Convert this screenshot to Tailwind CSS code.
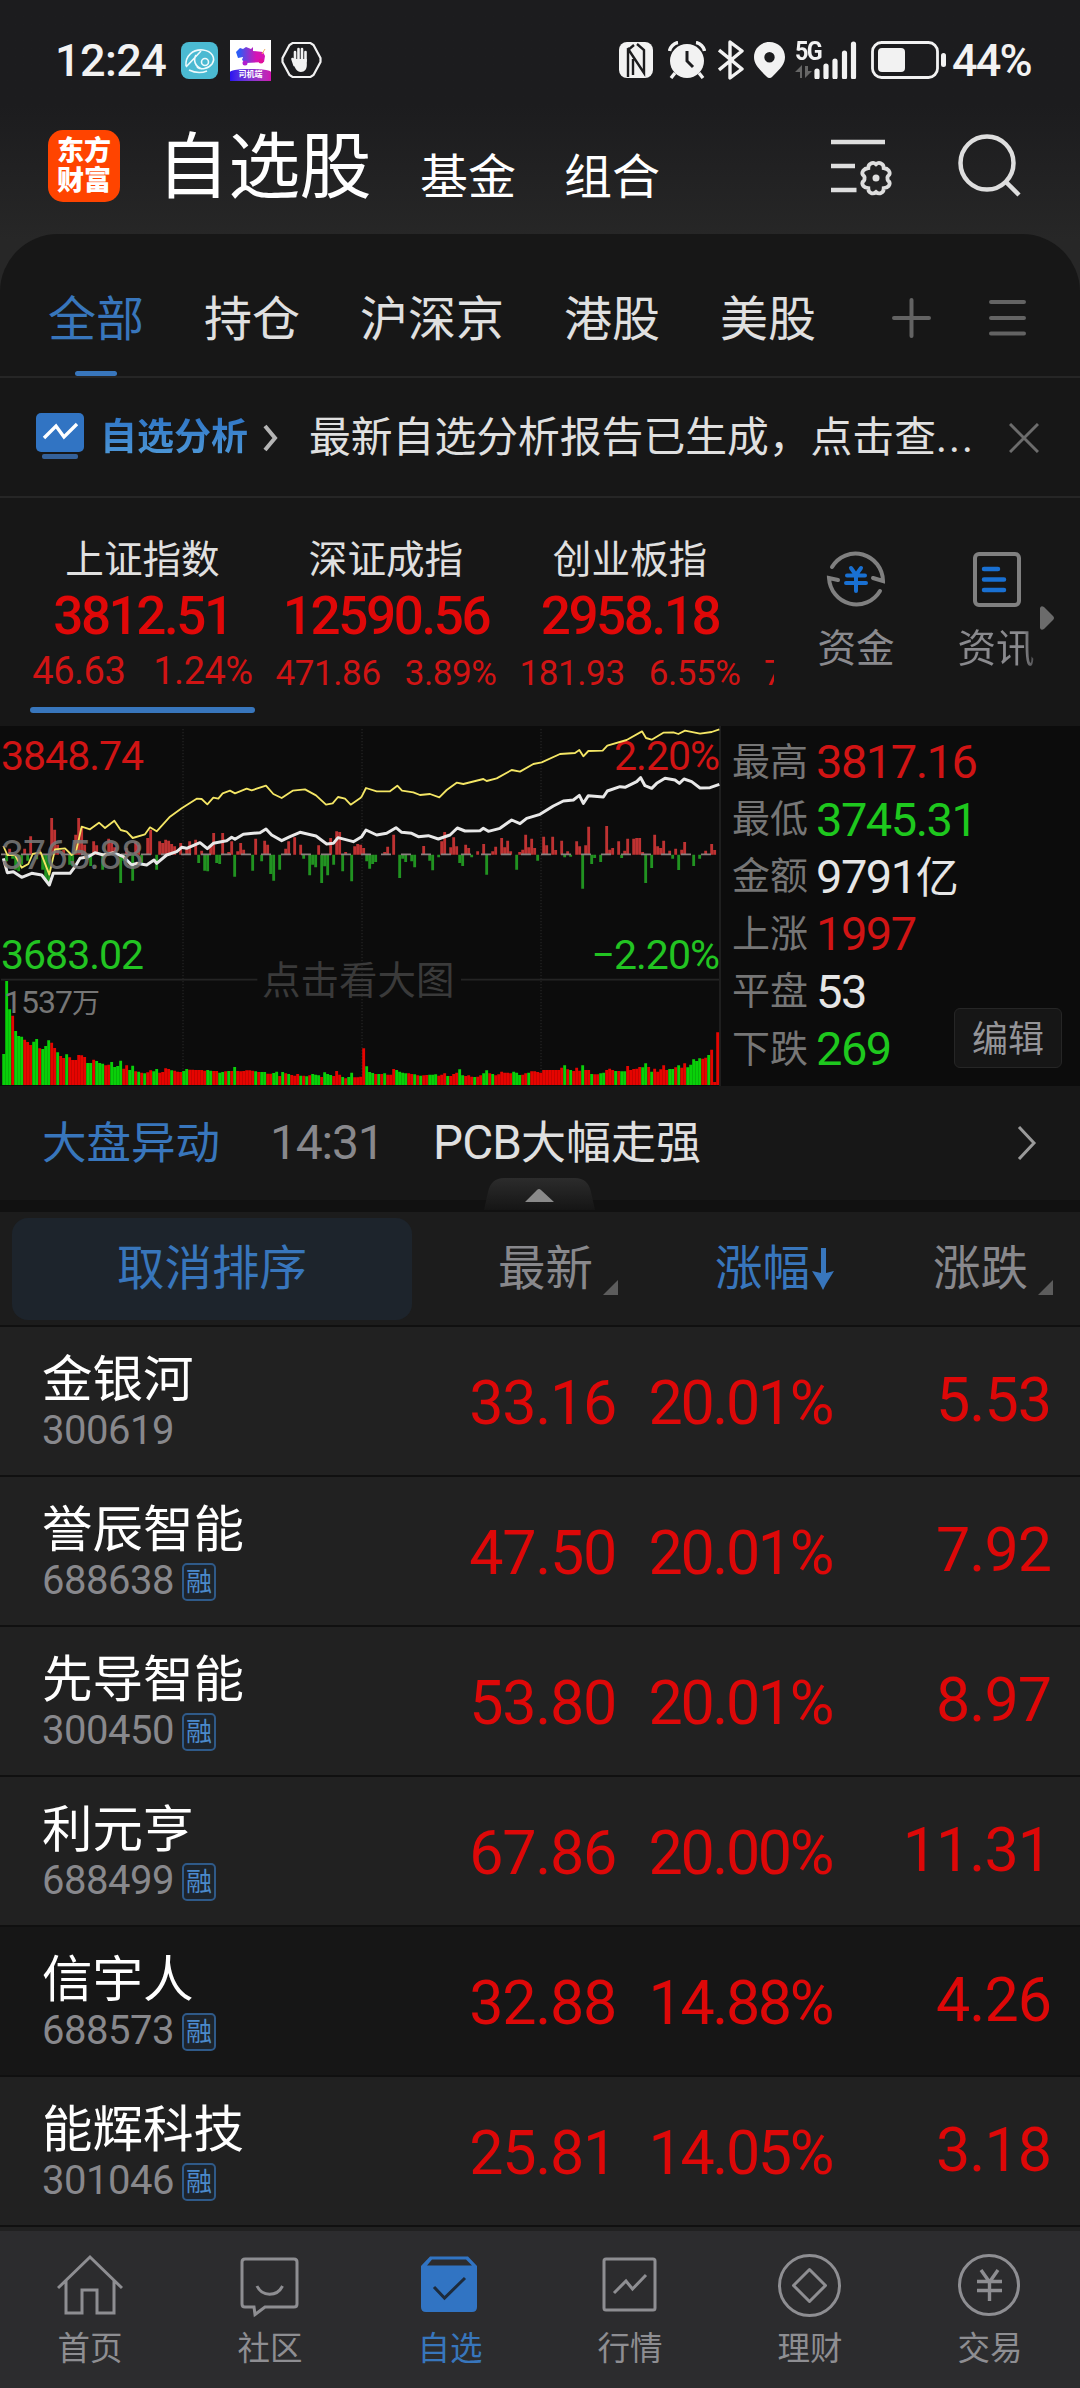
<!DOCTYPE html>
<html lang="zh-CN">
<head>
  <meta charset="UTF-8">
  <meta name="viewport" content="width=device-width, initial-scale=1.0">
  <script src="https://cdn.jsdelivr.net/npm/@tailwindcss/browser@4"></script>
  <title>自选股</title>
</head>
<body class="bg-[#171717]">
  <div class="w-[1080px] h-[2388px] overflow-hidden flex flex-col whitespace-nowrap leading-none text-[#e0e0e0] font-[Roboto,'Noto_Sans_CJK_SC',sans-serif]">

    <div class="h-[300px] shrink-0 bg-linear-to-b from-[#1c1c1e] from-35% to-[#272727] to-80%">
      <!-- Status bar -->
      <div class="h-[120px] flex items-center pl-[55px] pr-[47px] text-[#f2f2f2]">
        <span class="w-[126px] text-[45px] font-medium tracking-[-0.600px]">12:24</span>
        <svg class="w-[37px] h-[37px]" viewBox="0 0 37 37" fill="none">
          <rect width="37" height="37" rx="8" fill="#4bbad2"/>
          <path d="M5 24C4 14 12 7 22 8c9 1 13 8 9 14-4 5-11 6-15 3M5 25L20 9M15 13c-3 5-1 12 6 14M8 28c6 3 13 3 18 1" stroke="#eefafc" stroke-width="1.6"/>
          <circle cx="24" cy="20" r="3.5" stroke="#eefafc" stroke-width="1.6"/>
        </svg>
        <div class="ml-[12px] w-[41px] h-[41px] bg-white flex flex-col justify-between overflow-hidden">
          <svg class="w-[41px] h-[28px]" viewBox="0 0 41 28">
            <defs><linearGradient id="van"><stop offset="0.1" stop-color="#2b5cf6"/><stop offset="0.7" stop-color="#d613b4"/></linearGradient></defs>
            <path d="M6 12l4-4 3 1 3-2 5 2 2-2v4l10 1 2 4-1 6-18 1-4-3 1-3-5 1z" fill="url(#van)"/>
            <circle cx="15" cy="23" r="2.5" fill="#b01fd0"/><circle cx="31" cy="21" r="2.5" fill="#e0109a"/>
            <path d="M32 14l3-5" stroke="#f0b060"/>
          </svg>
          <div class="h-[12px] rounded-t-[40%_3px] bg-linear-to-r from-[#2a10f0] to-[#d010b0] text-white text-[8px] leading-[12px] font-bold text-center">司机端</div>
        </div>
        <svg class="ml-[10px] w-[41px] h-[38px]" viewBox="0 0 41 38">
          <path d="M11.500 2h18l3 2 7 13v4l-7 13-3 2h-18l-3-2-7-13v-4l7-13z" fill="none" stroke="#f2f2f2" stroke-width="2.2"/>
          <path d="M14 20V11M17.500 19V8M21 19V8M24.500 20V11M13.500 24L11.500 18" stroke="#f2f2f2" stroke-width="2.6" stroke-linecap="round"/>
          <path d="M12.700 18h13.100v6c0 4-2 7-6 7s-6-4-7.100-8z" fill="#f2f2f2"/>
        </svg>

        <svg class="ml-auto w-[34px] h-[36px]" viewBox="0 0 34 36">
          <rect width="34" height="36" rx="8" fill="#f2f2f2"/>
          <path d="M9 35V8l6-5M8.500 6L25 31V12M25 28V8l-7-6M14 33V17" fill="none" stroke="#1c1c1e" stroke-width="2.400"/>
        </svg>
        <svg class="ml-[15px] w-[38px] h-[38px]" viewBox="0 0 38 38" fill="none" stroke="#f2f2f2">
          <circle cx="19" cy="20" r="17" fill="#f2f2f2" stroke="none"/>
          <path d="M1.500 10C2 6 6 2 10 1.500M36.500 10C36 6 32 2 28 1.500M7 32l-4 5M31 32l4 5" stroke-width="3.400"/>
          <path d="M19 10v10l6 6" stroke="#1c1c1e" stroke-width="3"/>
        </svg>
        <svg class="ml-[12px] w-[26px] h-[40px]" viewBox="0 0 26 40" fill="none" stroke="#f2f2f2" stroke-width="3.400" stroke-linejoin="round">
          <path d="M1 10l23 19-12 9V2l12 9L1 30"/>
        </svg>
        <svg class="ml-[10px] w-[31px] h-[36px]" viewBox="0 0 31 36">
          <path fill-rule="evenodd" d="M15.500 0C7 0 0 6.500 0 15c0 7 4 11 12.500 19.500q3 3 6 0C27 26 31 22 31 15 31 6.500 24 0 15.500 0zm0 10a5.200 5.200 0 1 1 0 10.400 5.200 5.200 0 0 1 0-10.400z" fill="#f2f2f2"/>
        </svg>
        <div class="relative ml-[10px] w-[62px] h-[38px]">
          <span class="absolute left-0 -top-[2px] text-[26px] leading-[24px] font-bold tracking-[-2px] scale-x-90 origin-left">5G</span>
          <svg class="w-[62px] h-[38px]" viewBox="0 0 62 38">
            <path d="M5 37V31H0l7-7v13zM10 25v12l7-7h-4v-5z" fill="#666"/>
            <path d="M22 30v6M31 25v11M40 20v16M49.500 12v24M58.500 3v33" stroke="#f2f2f2" stroke-width="5.200" stroke-linecap="round"/>
          </svg>
        </div>
        <svg class="ml-[14px] w-[75px] h-[38px]" viewBox="0 0 75 38">
          <rect x="1.500" y="1.500" width="65" height="35" rx="9" fill="none" stroke="#f2f2f2" stroke-width="2.800"/>
          <rect x="7" y="7" width="27" height="24" rx="4" fill="#f2f2f2"/>
          <rect x="70" y="12" width="5" height="14" rx="2.500" fill="#f2f2f2"/>
        </svg>
        <span class="ml-[6px] w-[81px] text-[45px] font-medium tracking-[-1.800px]">44%</span>
      </div>

      <!-- Title bar -->
      <div class="h-[114px] flex pl-[48px] text-white">
        <div class="mt-[10px] w-[72px] h-[72px] rounded-[15px] bg-[#ff4400] flex flex-col items-center justify-center text-[27px] leading-[30px] font-black">
          <span>东方</span><span>财富</span>
        </div>
        <span class="ml-[37px] mt-[12px] w-[217px] text-[72px] leading-[72px] tracking-[-0.700px]">自选股</span>
        <span class="ml-[46px] mt-[34px] text-[48px]">基金</span>
        <span class="ml-[48px] mt-[34px] text-[48px]">组合</span>
        <svg class="ml-[171px] mt-[16px] w-[64px] h-[62px]" viewBox="0 0 64 62" fill="none" stroke="#dedede" stroke-width="4.500">
          <path d="M0 6h54M0 30h24M0 54h25.500"/>
          <path d="M40 27.500q2.500-1.500 5 .7 2.500-2.200 5-.7 2.700 1 2.700 4.500 3.300.5 5 2.500 1.800 2.500.3 4.500-2 1.500-1.500 3.500-.2 2 1.500 3 1.500 2-.3 4.500-1.700 2-5 2.200 0 3.800-2.700 4.800-2.500 1.200-5-1-2.500 2.200-5 1-2.700-1-2.700-4.800-3.300-.2-5-2.200-1.800-2.500-.3-4.500 1.700-1 1.500-3 .5-2-1.500-3.500-1.500-2 .3-4.500 1.700-2 5-2.500 0-3.500 2.700-4.500z" stroke-width="3.800"/>
          <circle cx="45" cy="42" r="3.500" fill="#dedede" stroke="none"/>
        </svg>
        <svg class="ml-[63px] mt-[12px] w-[66px] h-[66px]" viewBox="0 0 66 66" fill="none" stroke="#dedede" stroke-width="4.500">
          <circle cx="29" cy="31" r="26.500"/><path d="M48 50l13 13"/>
        </svg>
      </div>
      <div class="h-[66px] rounded-t-[58px] bg-[#171717]"></div>
    </div>

    <!-- Group tabs -->
    <div class="-mt-[66px] h-[144px] shrink-0 border-b-2 border-[#262626] flex gap-[60px] pl-[48px] pt-[62px] text-[48px]">
      <div class="flex flex-col items-center text-[#3876bc]"><span>全部</span><span class="mt-[27px] w-[42px] h-[6px] rounded-full bg-[#3876bc]"></span></div>
      <span>持仓</span>
      <span>沪深京</span>
      <span>港股</span>
      <span>美股</span>
      <svg class="ml-[16px] mt-px w-[134px] h-[42px]" viewBox="0 0 134 42" fill="none" stroke="#636363" stroke-width="4" stroke-linecap="round">
        <path d="M2 21h35M19.500 3v36M99 5h33M99 21h33M99 36.500h33"/>
      </svg>
    </div>

    <!-- Analysis banner -->
    <div class="h-[120px] shrink-0 border-b-2 border-[#262626] flex items-center pl-[36px]">
      <svg class="-mt-[1px] w-[48px] h-[47px]" viewBox="0 0 48 47">
        <rect width="48" height="39" rx="5" fill="#3174c3"/><rect x="6" y="41" width="36" height="5" rx="2" fill="#34619a"/>
        <path d="M8 25l12-12 8 11 13-13" fill="none" stroke="#fff" stroke-width="3.400"/>
      </svg>
      <span class="ml-[16px] mt-[2px] w-[149px] text-[37px] font-bold bg-linear-to-b from-[#2f75c6] to-[#519bd8] bg-clip-text text-transparent leading-[44px]">自选分析</span>
      <svg class="ml-[14px] mt-[2px] w-[16px] h-[28px]" viewBox="0 0 16 28" fill="none" stroke="#b5b5b5" stroke-width="4"><path d="M2 2l10 12L2 26"/></svg>
      <span class="ml-[30px] mt-[2px] w-[668px] text-[41.800px]">最新自选分析报告已生成，点击查<span class="tracking-[2px]">...</span></span>
      <svg class="ml-[32px] mt-[2px] w-[30px] h-[30px]" viewBox="0 0 30 30" stroke="#6c6c6c" stroke-width="3"><path d="M1 1l28 28M29 1L1 29"/></svg>
    </div>

    <!-- Indices -->
    <div class="h-[228px] shrink-0 flex">
      <div class="w-[774px] pl-[21px] overflow-hidden flex">
        <div class="w-[243px] shrink-0 flex flex-col items-center pt-[43px]">
          <span class="text-[38.600px]">上证指数</span>
          <span class="mt-[10px] text-[53px] font-medium tracking-[-2.400px] text-[#e00808]">3812.51</span>
          <div class="mt-[9px] flex gap-[28px] text-[38px] tracking-[-0.500px] text-[#d01414]"><span>46.63</span><span>1.24%</span></div>
          <span class="mt-[17px] w-[225px] h-[6px] rounded-full bg-[#3876bc]"></span>
        </div>
        <div class="w-[244px] shrink-0 flex flex-col items-center pt-[43px]">
          <span class="text-[38.600px]">深证成指</span>
          <span class="mt-[10px] text-[53px] font-medium tracking-[-2.400px] text-[#e00808]">12590.56</span>
          <div class="mt-[13px] flex gap-[24px] text-[35px] tracking-[-0.400px] text-[#d01414]"><span>471.86</span><span>3.89%</span></div>
        </div>
        <div class="w-[244px] shrink-0 flex flex-col items-center pt-[43px]">
          <span class="text-[38.600px]">创业板指</span>
          <span class="mt-[10px] text-[53px] font-medium tracking-[-2.400px] text-[#e00808]">2958.18</span>
          <div class="mt-[13px] flex gap-[24px] text-[35px] tracking-[-0.400px] text-[#d01414]"><span>181.93</span><span>6.55%</span></div>
        </div>
        <span class="ml-[12px] mt-[158px] text-[35px] text-[#d01414]">7</span>
      </div>
      <div class="ml-[43px] w-[78px] flex flex-col items-center pt-[50px] text-[#8a8a8e]">
        <svg class="w-[60px] h-[62px]" viewBox="0 0 60 62" fill="none" stroke="#808080" stroke-width="4" stroke-linecap="round">
          <path d="M6 19A27.500 28 0 0 1 57 33l-10-3M54 43A27.500 28 0 0 1 3 30l9 2"/>
          <path d="M25 20l5 7 5-7M21 27.500h18M20 35h20M30 28v15" stroke="#1970d2"/>
        </svg>
        <span class="mt-[20px] text-[38.600px]">资金</span>
      </div>
      <div class="ml-[63px] w-[78px] flex flex-col items-center pt-[53px] text-[#8a8a8e]">
        <svg class="w-[50px] h-[56px]" viewBox="0 0 50 56" fill="none" stroke="#808080" stroke-width="4" stroke-linecap="round">
          <rect x="3" y="3" width="44" height="51" rx="4"/>
          <path d="M12 18h14M12 28.500h20M12 39h20" stroke="#1970d2" stroke-width="4.500"/>
        </svg>
        <span class="mt-[20px] -ml-[2px] text-[38.600px] leading-[44px] bg-linear-to-r from-[#8a8a8e] from-85% to-[#4a4a4c] bg-clip-text text-transparent">资讯</span>
      </div>
      <svg class="ml-[3px] mt-[107px] w-[16px] h-[26px]" viewBox="0 0 16 26"><path d="M1 3v20q1 3 4 1l9-9q2-2 0-4L5 2Q2 0 1 3z" fill="#6b6b6b"/></svg>
    </div>

    <!-- Intraday chart and market stats -->
    <div class="relative h-[360px] shrink-0 flex bg-[#0c0c0c]">
      <div class="relative w-[722px] h-[360px] text-[41px] tracking-[-1px]">
        <svg class="absolute left-0 top-0 w-[721px] h-[360px]" viewBox="0 18 2163 1080" fill="none">
          <path d="M549 27V1095M1086 27V1095M1623 27V1095" stroke="#232323" stroke-width="4" stroke-dasharray="4 5"/>
          <path d="M3 779H772M1383 779H2160" stroke="#242424" stroke-width="5"/>
          <path d="M2160 18V1098" stroke="#1e1e1e" stroke-width="6"/>
          <path id="vol-up" stroke="#e60400" stroke-width="8.600"/>
          <path id="vol-down" stroke="#09d009" stroke-width="8.600"/>
        </svg>
        <span class="absolute left-px top-[10px] text-[#d01414]">3848.74</span>
        <span class="absolute right-[3px] top-[10px] text-[#d01414]">2.20%</span>
        <svg class="absolute left-0 top-0 w-[721px] h-[360px]" viewBox="0 18 2163 1080" fill="none">
          <path id="flow-up" stroke="#be3232" stroke-width="8.500"/>
          <path id="flow-down" stroke="#219321" stroke-width="8.500"/>
          <path d="M3 403H2145" stroke="#8a8080" stroke-width="5" stroke-dasharray="30 30"/>
          <polyline stroke="#e8e8e8" stroke-width="9" stroke-linejoin="round" points="10,415 22,458 40,455 65,472 95,460 125,465 148,495 160,460 210,460 225,440 240,415 265,410 285,398 310,405 340,398 370,410 395,435 410,430 440,435 462,420 470,430 500,405 530,395 545,382 560,385 600,368 622,386 640,370 680,362 695,352 705,358 730,343 760,340 780,338 798,327 815,345 845,362 870,350 900,337 935,345 948,348 980,372 1000,370 1014,353 1060,365 1085,350 1098,330 1130,345 1160,340 1188,323 1205,337 1235,340 1255,350 1285,347 1315,357 1350,345 1372,324 1395,333 1440,332 1450,325 1465,334 1500,325 1535,300 1560,311 1580,295 1620,283 1660,258 1690,243 1720,240 1738,226 1750,250 1765,227 1810,231 1822,213 1860,200 1875,202 1910,185 1922,173 1935,197 1955,205 1970,190 1995,175 2025,180 2038,190 2052,177 2075,185 2100,204 2130,203 2158,193"/>
          <polyline stroke="#f4e665" stroke-width="5.500" stroke-linejoin="round" points="10,378 22,405 45,405 65,443 85,432 98,402 122,397 148,464 165,388 195,385 215,405 228,395 245,320 270,328 297,308 315,324 343,302 362,330 380,335 398,354 435,343 450,322 470,334 510,290 545,265 590,236 605,237 622,253 640,233 655,236 668,220 690,212 705,220 740,206 755,211 798,197 820,222 845,234 878,212 915,208 948,226 978,254 998,250 1014,231 1035,236 1052,254 1080,235 1085,230 1098,204 1130,214 1170,214 1192,197 1206,212 1240,217 1260,225 1290,222 1318,232 1340,210 1370,188 1390,192 1450,177 1460,183 1490,175 1535,150 1560,155 1600,132 1625,127 1680,102 1725,99 1738,90 1750,109 1765,93 1808,92 1822,77 1880,60 1926,34 1938,54 1955,59 1990,38 2020,37 2035,42 2055,32 2100,41 2135,36 2158,28"/>
        </svg>
        <span class="absolute left-px top-[109px] text-[#777777e0]">3765.88</span>
        <span class="absolute left-px top-[209px] text-[#22c422]">3683.02</span>
        <span class="absolute right-[3px] top-[209px] text-[#22c422]">−2.20%</span>
        <span class="absolute left-[4px] top-[260px] text-[32px] tracking-[-1px] text-[#767676]">1537<span class="text-[28px]">万</span></span>
        <span class="absolute left-[262px] top-[236px] text-[38.500px] tracking-normal text-[#3a3a3a]">点击看大图</span>
      </div>
      <div id="stats" class="pl-[10px] pt-[7px]"></div>
      <button class="absolute left-[954px] top-[282px] w-[108px] h-[60px] pt-[3px] rounded-[6px] border border-[#262626] bg-[#161616] text-[36px] text-[#949498]">编辑</button>
    </div>

    <!-- Market alert -->
    <div class="relative h-[126px] shrink-0 flex items-center pl-[42px] border-b-[12px] border-[#111]">
      <span class="mt-[2px] text-[44.500px] text-[#3876bc]">大盘异动</span>
      <span class="ml-[50px] w-[117px] text-[48px] tracking-[-1.200px] text-[#88888c]">14:31</span>
      <span class="ml-[46px] mt-px text-[47.500px] tracking-[-0.800px]">PCB<span class="text-[45px] tracking-normal">大幅走强</span></span>
      <svg class="absolute left-[1017px] top-[40px] w-[20px] h-[34px]" viewBox="0 0 20 34" fill="none" stroke="#9a9a9a" stroke-width="3"><path d="M2 1l15 16L2 33"/></svg>
      <svg class="absolute left-[484px] top-[92px] w-[111px] h-[32px]" viewBox="0 0 111 32">
        <defs><linearGradient id="tab" x2="0" y2="1"><stop stop-color="#2c2c2c"/><stop offset="1" stop-color="#151515"/></linearGradient></defs>
        <path d="M0 32L4 14Q7 0 20 0H91Q104 0 107 14L111 32z" fill="url(#tab)"/>
        <path d="M55 11q1 0 2 1l13 12H41L53 12q1-1 2-1z" fill="#8a8a8a"/>
      </svg>
    </div>

    <!-- Table header -->
    <div class="h-[115px] shrink-0 flex items-center pl-[12px] bg-[#1c1c1c] border-b-2 border-[#101010] text-[47.500px] text-[#88888c]">
      <button class="w-[400px] h-[102px] pt-[2px] rounded-[16px] bg-[#1d242c] text-[#3876bc]">取消排序</button>
      <span class="ml-[86px] mt-[2px]">最新</span>
      <svg class="ml-[10px] mt-[38px] w-[15px] h-[15px]" viewBox="0 0 15 15"><path d="M15 0v15H0z" fill="#5c5c5c"/></svg>
      <span class="ml-[97px] mt-[2px] text-[#3876bc]">涨幅</span>
      <svg class="ml-[2px] w-[22px] h-[43px]" viewBox="0 0 22 43"><path d="M9 1h5v25l8-2-8 13-3 6-3-6L0 24l9 2z" fill="#3876bc"/></svg>
      <span class="ml-[99px] mt-[2px]">涨跌</span>
      <svg class="ml-[10px] mt-[38px] w-[15px] h-[15px]" viewBox="0 0 15 15"><path d="M15 0v15H0z" fill="#5c5c5c"/></svg>
    </div>

    <!-- Stock rows -->
    <div id="stocks" class="h-[904px] shrink-0 bg-[#212121]"></div>

    <!-- Bottom nav -->
    <div class="h-[157px] shrink-0 bg-[#2c2c2e] grid grid-cols-6 text-[32.500px] text-[#8e8e92]">
      <div class="flex flex-col items-center pt-[23px] gap-[15px]">
        <svg class="w-[66px] h-[64px]" viewBox="0 0 66 64" fill="none" stroke="#8e8e92" stroke-width="3"><path d="M1 34L33 3l32 31M9 27v32h16V36h15v23h17V27"/></svg>
        <span>首页</span>
      </div>
      <div class="flex flex-col items-center pt-[23px] gap-[15px]">
        <svg class="w-[66px] h-[64px]" viewBox="0 0 66 64" fill="none" stroke="#8e8e92" stroke-width="3"><path d="M17 53H8q-3 0-3-3V8q0-3 3-3h49q3 0 3 3v42q0 3-3 3H28l-10 7.500zM20 32c5 11 20 11 25.500 0"/></svg>
        <span>社区</span>
      </div>
      <div class="flex flex-col items-center pt-[23px] gap-[15px] text-[#3876bc]">
        <svg class="w-[66px] h-[64px]" viewBox="0 0 66 64" fill="none"><path d="M4 12L13 2.500h38L60 12v41q0 5-5 5H9q-5 0-5-5zM10 11.500h45l-6-6H15z" fill="#3174c3" fill-rule="evenodd"/><path d="M17 33l10.500 11L48 24" stroke="#1d2b3c" stroke-width="3"/></svg>
        <span>自选</span>
      </div>
      <div class="flex flex-col items-center pt-[23px] gap-[15px]">
        <svg class="w-[66px] h-[64px]" viewBox="0 0 66 64" fill="none" stroke="#8e8e92" stroke-width="3"><rect x="7" y="5" width="51" height="51" rx="2"/><path d="M17 39l12-12 6.500 8L49 21"/></svg>
        <span>行情</span>
      </div>
      <div class="flex flex-col items-center pt-[23px] gap-[15px]">
        <svg class="w-[66px] h-[64px]" viewBox="0 0 66 64" fill="none" stroke="#8e8e92" stroke-width="3"><circle cx="32.500" cy="31.500" r="30"/><path d="M32.500 15.500l16 16-16 16-16-16z" stroke-linejoin="round"/></svg>
        <span>理财</span>
      </div>
      <div class="flex flex-col items-center pt-[23px] gap-[15px]">
        <svg class="w-[66px] h-[64px]" viewBox="0 0 66 64" fill="none" stroke="#8e8e92" stroke-width="3"><circle cx="32" cy="31" r="29.500"/><path d="M24 16l8.500 12L41 16M20 27.500h25M20 36.500h25M32.500 27v20" stroke-width="3.400"/></svg>
        <span>交易</span>
      </div>
    </div>
  </div>

  <script>
    const stocks = [
      ['金银河', '300619', false, '33.16', '20.01%', '5.53'],
      ['誉辰智能', '688638', true, '47.50', '20.01%', '7.92'],
      ['先导智能', '300450', true, '53.80', '20.01%', '8.97'],
      ['利元亨', '688499', true, '67.86', '20.00%', '11.31'],
      ['信宇人', '688573', true, '32.88', '14.88%', '4.26'],
      ['能辉科技', '301046', true, '25.81', '14.05%', '3.18'],
    ];

    document.getElementById('stocks').innerHTML = stocks.map(([name, code, margin, price, pct, diff], i) => `
      <div class="h-[150px] flex items-center border-b-2 border-[#101010] pt-[4px] pl-[42px] text-[61px] text-[#dd0808] ${i === 4 ? 'bg-[#161616]' : 'bg-[#212121]'}">
        <div class="w-[380px]">
          <div class="text-[50.500px] text-white">${name}</div>
          <div class="mt-[6px] h-[40px] flex items-center text-[40px] tracking-[-0.500px] text-[#88888c]">${code}
            ${margin ? '<span class="ml-[8px] mt-[2px] w-[34px] h-[38px] rounded-[5px] border-2 border-[#2f5a89] bg-[#1d242c] text-[26px] leading-[34px] tracking-normal text-center text-[#4b8acb] flex justify-center">融</span>' : ''}
          </div>
        </div>
        <span class="w-[194px] text-right tracking-[-1.300px]">${price}</span>
        <span class="w-[216px] text-right tracking-[-2.400px]">${pct}</span>
        <span class="-mt-[5px] w-[219px] text-right tracking-[-1px]">${diff}</span>
      </div>`).join('');

    const stats = [
      ['最高', '3817.16', '', 'text-[#d01414]'],
      ['最低', '3745.31', '', 'text-[#1ec81e]'],
      ['金额', '9791', '亿', 'text-[#e6e6e6]'],
      ['上涨', '1997', '', 'text-[#d01414]'],
      ['平盘', '53', '', 'text-[#e6e6e6]'],
      ['下跌', '269', '', 'text-[#1ec81e]'],
    ];
    document.getElementById('stats').innerHTML = stats.map(([label, value, unit, color]) => `
      <div class="h-[57.400px] flex items-center">
        <span class="w-[84px] text-[38px] text-[#767676]">${label}</span>
        <span class="text-[47px] tracking-[-1.500px] ${color}">${value}<span class="text-[43px]">${unit}</span></span>
      </div>`).join('');

    // Volume per minute: height followed by u(p) or d(own)
    const volume = ('93d 312d 227d 208u 162d 147d 145d 136u 129u 120u 130d 138d 110u 108d 117d 134d 127u 111u 98d 87u 81u 92d 83u 75u 75u 90u 89u 84u 66d 66d 76u 72d 66d 64d 59u 61u 69d 54d 57d 73d ' +
      '49u 59u 45d 58d 41u 40d 37u 35d 38u 44u 41d 48d 37u 39u 50u 48u 44d 43u 40u 39u 42d 48d 46u 46u 45u 45u 45u 43u 45d 43d 42u 42u 37d 39d 41u 42d 42u 54d 42u 41u ' +
      '42u 44u 44u 43u 41d 39u 39d 39d 34u 34u 36d 40d 27u 39d 35u 33d 30u 28u 33u 28d 28u 26d 29u 33d 31d 29d 24u 38d 33d 30d 27u 42u 31u 24d 20u 24d 37d 23u 23u 25u ' +
      '110u 56d 39d 36d 33u 33d 33u 35d 31u 31u 48u 45d 40d 37d 35d 35u 33u 32d 29u 28d 29u 30u 31d 31d 32d 28u 31u 35u 27d 27u 33u 37u 47d 29d 27u 29u 25u 24d 25u 29u ' +
      '35d 44d 35u 33d 29u 32u 40u 37u 37u 35u 40d 37d 30d 31u 35u 37d 41u 41u 39u 37u 45u 45u 45u 45u 45u 45u 52u 59d 47u 45d 42u 52u 43u 59d 45u 45u 33d 32u 32u 35d ' +
      '37d 45u 49u 45u 42d 42u 41d 41d 57u 45u 48u 49u 54u 53d 65d 54u 40d 49u 40u 47u 59u 45u 48d 48d 53u 59d 52u 65u 53d 61d 77d 72d 80d 79u 82u 90d 106u 9u 158u').split(' ');

    let up = '', down = '';
    volume.forEach((v, i) => {
      const seg = `M${11 + i * 9} 1095v-${parseInt(v)}`;
      if (v.endsWith('u')) up += seg; else down += seg;
    });
    document.getElementById('vol-up').setAttribute('d', up);
    document.getElementById('vol-down').setAttribute('d', down);

    // Capital flow around the previous close, keyed by minute index
    const inflow = { 2: 18, 7: 18, 9: 55, 12: 14, 16: 110, 17: 75, 18: 30, 20: 14, 24: 60, 25: 110, 26: 80, 27: 30, 30: 40, 31: 28, 35: 48, 36: 36, 37: 22, 41: 20, 44: 40, 45: 30, 48: 50, 49: 75, 52: 40, 53: 35, 54: 45, 55: 42, 56: 32, 57: 25, 59: 35, 61: 18, 62: 40, 64: 45, 66: 12, 69: 25, 70: 65, 73: 65, 75: 8, 76: 40, 78: 10, 79: 35, 80: 15, 84: 48, 87: 42, 88: 30, 94: 18, 95: 40, 97: 52, 99: 30, 105: 28, 109: 50, 111: 70, 112: 68, 114: 8, 117: 25, 118: 32, 119: 30, 120: 20, 127: 8, 128: 24, 130: 60, 140: 26, 146: 40, 147: 68, 149: 22, 150: 52, 151: 25, 154: 30, 155: 20, 158: 10, 160: 32, 163: 10, 164: 24, 166: 50, 167: 22, 168: 42, 169: 10, 172: 8, 173: 15, 174: 60, 175: 22, 176: 48, 177: 20, 180: 54, 181: 28, 183: 54, 184: 14, 186: 42, 188: 10, 191: 40, 192: 25, 194: 28, 195: 84, 201: 86, 202: 15, 203: 20, 205: 40, 207: 12, 208: 48, 210: 48, 211: 50, 212: 50, 213: 8, 217: 60, 218: 25, 219: 20, 220: 42, 222: 12, 224: 18, 226: 15, 227: 38, 234: 12, 236: 32, 237: 14 };
    const outflow = { 1: 20, 3: 12, 4: 45, 5: 50, 6: 30, 8: 18, 11: 14, 13: 45, 14: 75, 15: 85, 22: 30, 23: 35, 28: 15, 29: 34, 33: 45, 39: 85, 40: 18, 43: 78, 46: 24, 51: 45, 65: 25, 67: 48, 68: 50, 71: 25, 72: 28, 77: 66, 83: 48, 86: 20, 89: 58, 90: 78, 92: 45, 100: 12, 102: 62, 103: 30, 104: 38, 106: 85, 107: 35, 108: 62, 110: 30, 113: 50, 116: 80, 121: 20, 122: 42, 123: 28, 124: 22, 132: 70, 133: 12, 134: 22, 136: 20, 137: 38, 142: 18, 143: 47, 145: 8, 152: 25, 153: 34, 156: 8, 161: 60, 171: 45, 178: 18, 187: 8, 189: 6, 193: 102, 196: 28, 197: 10, 199: 22, 206: 10, 214: 85, 216: 40, 223: 12, 225: 46, 230: 34, 232: 12 };
    const bars = (data, sign) => Object.entries(data).map(([i, h]) => `M${11 + i * 9} 404v${sign * h}`).join('');
    document.getElementById('flow-up').setAttribute('d', bars(inflow, -1));
    document.getElementById('flow-down').setAttribute('d', bars(outflow, 1));
  </script>
</body>
</html>
